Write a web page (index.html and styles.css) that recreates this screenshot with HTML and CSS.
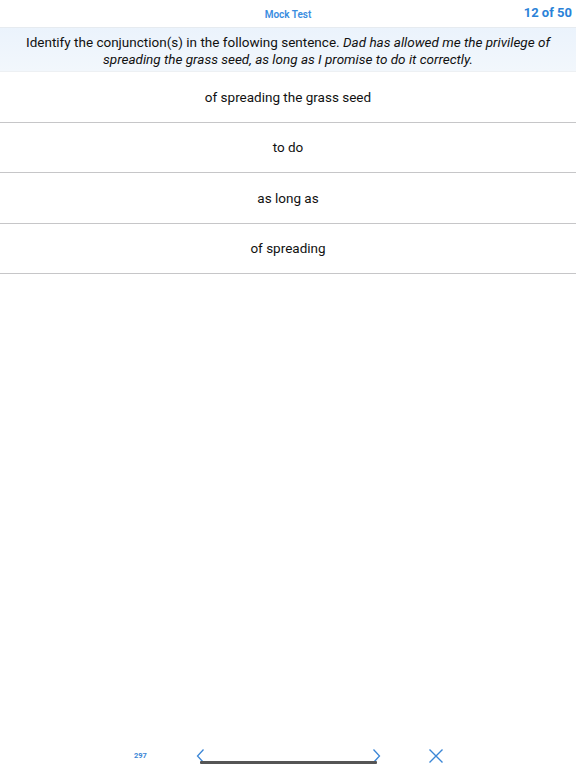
FILE: index.html
```html
<!DOCTYPE html>
<html>
<head>
<meta charset="utf-8">
<link rel="stylesheet" href="styles.css">
</head>
<body>
<div class="page">
  <header class="topbar">
    <div class="title">Mock Test</div>
    <div class="counter">12 of 50</div>
  </header>
  <div class="question">Identify the conjunction(s) in the following sentence. <em>Dad has allowed me the privilege of spreading the grass seed, as long as I promise to do it correctly.</em></div>
  <ul class="options">
    <li class="option">of spreading the grass seed</li>
    <li class="option">to do</li>
    <li class="option">as long as</li>
    <li class="option">of spreading</li>
  </ul>
  <div class="spacer"></div>
  <footer class="toolbar">
    <span class="code">297</span>
    <div class="scrubber">
      <svg class="chev" width="9" height="16" viewBox="0 0 9 16"><path d="M7.5 1.5 L1.5 8 L7.5 14.5" fill="none" stroke="#3b86d6" stroke-width="1.3"/></svg>
      <svg class="chev" width="9" height="16" viewBox="0 0 9 16"><path d="M1.5 1.5 L7.5 8 L1.5 14.5" fill="none" stroke="#3b86d6" stroke-width="1.3"/></svg>
    </div>
    <svg class="close" width="16" height="16" viewBox="0 0 16 16"><path d="M1.5 1.5 L14.5 14.5 M14.5 1.5 L1.5 14.5" fill="none" stroke="#3b86d6" stroke-width="1.4"/></svg>
  </footer>
</div>
</body>
</html>
```
FILE: styles.css
```css
* { box-sizing: border-box; }
html, body { margin: 0; padding: 0; background: #fff; }
body { font-family: Roboto, "Noto Sans", sans-serif; color: #111; }
.page { width: 576px; height: 768px; display: flex; flex-direction: column; }
.topbar { height: 28px; position: relative; display: flex; align-items: center; justify-content: flex-end; padding-right: 4px; border-bottom: 1px solid #e6ebf0; }
.title { position: absolute; left: 0; right: 0; text-align: center; font-size: 10px; font-weight: 600; color: #3a8ddf; top: 9px; }
.counter { font-size: 13px; font-weight: 700; color: #2a82d8; position: relative; top: -1px; }
.question { background: linear-gradient(#ebf3fc, #f2f7fc); text-align: center; font-size: 13.5px; line-height: 17.5px; padding: 5.5px 10px 2.5px; border-bottom: 1px solid #edf0f3; }
.question em { font-style: italic; }
.options { list-style: none; margin: 0; padding: 0; }
.option { height: 50.5px; display: flex; align-items: center; justify-content: center; font-size: 13.5px; border-bottom: 1px solid #c6c6c8; }
.spacer { flex: 1; }
.toolbar { height: 28px; display: flex; align-items: center; padding-left: 134px; padding-top: 3px; }
.code { font-size: 7.5px; font-weight: 700; color: #3b86d6; width: 13px; }
.scrubber { margin-left: 49px; width: 185px; display: flex; justify-content: space-between; align-items: center; position: relative; }
.scrubber::after { content: ""; position: absolute; left: 4px; right: 4px; top: 13px; height: 3px; background: #555; border-radius: 1px; }
.close { margin-left: 47px; }
```
